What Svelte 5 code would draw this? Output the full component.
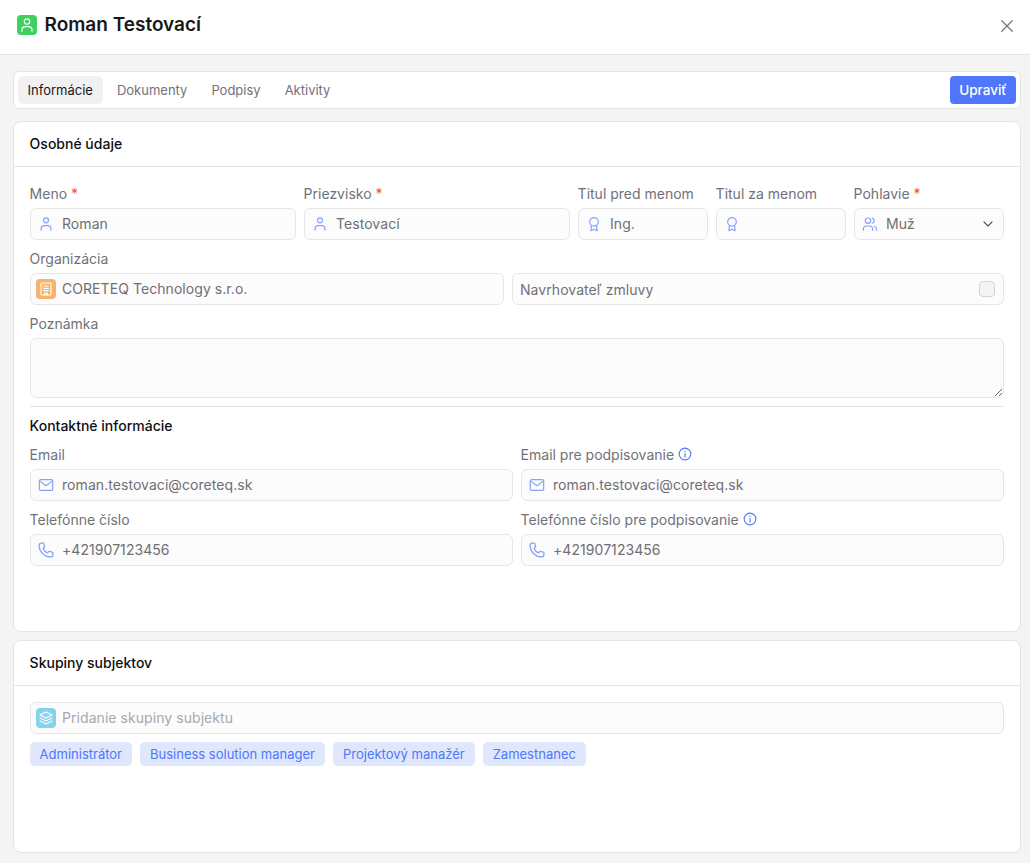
<script>
  const tabs = ['Informácie', 'Dokumenty', 'Podpisy', 'Aktivity'];
  const groups = ['Administrátor', 'Business solution manager', 'Projektový manažér', 'Zamestnanec'];
</script>

{#snippet person()}
  <svg class="ic" viewBox="0 0 24 24"><circle cx="12" cy="6.5" r="3.8"/><path d="M4.6 21.2v-1.7a5 5 0 0 1 5-5h4.8a5 5 0 0 1 5 5v1.700"/></svg>
{/snippet}
{#snippet award()}
  <svg class="ic" viewBox="0 0 24 24"><circle cx="12" cy="8.8" r="6.5"/><path d="M8.2 14.4L7.4 22l4.6-2.2 4.6 2.2-.8-7.600"/></svg>
{/snippet}
{#snippet mail()}
  <svg class="ic" viewBox="0 0 24 24"><rect x="2" y="4" width="20" height="16" rx="2"/><path d="M2.6 6.2L12 13l9.4-6.800"/></svg>
{/snippet}
{#snippet phone()}
  <svg class="ic" viewBox="1 1 22 22"><path d="M5.5 2.5h2.6a1 1 0 0 1 1 .8l1 4a1 1 0 0 1-.4 1L8 9.8a12 12 0 0 0 6.2 6.2l1.5-1.7a1 1 0 0 1 1-.4l4 1a1 1 0 0 1 .8 1v2.6a3 3 0 0 1-3 3A16 16 0 0 1 2.5 5.5a3 3 0 0 1 3-3z"/></svg>
{/snippet}
{#snippet info()}
  <svg class="info" viewBox="0 0 24 24"><circle cx="12" cy="12" r="10"/><path d="M12 11v6M12 7v.6"/></svg>
{/snippet}

<div class="page">
  <header class="top">
    <div class="title">
      <span class="badge green">
        <svg viewBox="0 0 24 24"><circle cx="12" cy="6.8" r="4"/><path d="M4.5 21.5v-2a5 5 0 0 1 5-5h5a5 5 0 0 1 5 5v2"/></svg>
      </span>
      <h1>Roman Testovací</h1>
    </div>
    <button class="close" aria-label="Zavrieť">
      <svg viewBox="0 0 24 24"><path d="M5 5l14 14M19 5L5 19"/></svg>
    </button>
  </header>

  <main class="content">
    <nav class="tabs">
      <div class="tablist">
        {#each tabs as tab, i}
          <span class="tab" class:active={i === 0}>{tab}</span>
        {/each}
      </div>
      <button class="edit">Upraviť</button>
    </nav>

    <section class="card first">
      <h2 class="card-head">Osobné údaje</h2>
      <div class="card-body">
        <div class="row r1">
          <div class="field">
            <div class="label">Meno <i>*</i></div>
            <div class="input">{@render person()}<span>Roman</span></div>
          </div>
          <div class="field">
            <div class="label">Priezvisko <i>*</i></div>
            <div class="input">{@render person()}<span>Testovací</span></div>
          </div>
          <div class="field">
            <div class="label">Titul pred menom</div>
            <div class="input">{@render award()}<span>Ing.</span></div>
          </div>
          <div class="field">
            <div class="label">Titul za menom</div>
            <div class="input">{@render award()}</div>
          </div>
          <div class="field">
            <div class="label">Pohlavie <i>*</i></div>
            <div class="input">
              <svg class="ic" viewBox="0 0 24 24"><circle cx="9" cy="7" r="4"/><path d="M2 21.5V20a5 5 0 0 1 5-5h4a5 5 0 0 1 5 5v1.500M15.500 3.200a4 4 0 0 1 0 7.600M18.500 15.300a5 5 0 0 1 3.500 4.700v1.500"/></svg>
              <span>Muž</span>
              <svg class="chev" viewBox="0 0 24 24"><path d="M6 9l6 6 6-6"/></svg>
            </div>
          </div>
        </div>

        <div class="row r2">
          <div class="field">
            <div class="label">Organizácia</div>
            <div class="input badged">
              <span class="badge orange">
                <svg viewBox="0 0 24 24"><rect x="4.500" y="3" width="15" height="18" rx="1.500"/><path d="M8.500 7.500h7M8.500 11h7M8.500 14.500h7M10 21v-3h4v3"/></svg>
              </span>
              <span>CORETEQ Technology s.r.o.</span>
            </div>
          </div>
          <div class="field">
            <div class="label">&nbsp;</div>
            <div class="input check"><span>Navrhovateľ zmluvy</span><b class="box"></b></div>
          </div>
        </div>

        <div class="field">
          <div class="label">Poznámka</div>
          <textarea aria-label="Poznámka"></textarea>
        </div>

        <hr />
        <h3>Kontaktné informácie</h3>

        <div class="row r3">
          <div class="field">
            <div class="label">Email</div>
            <div class="input">{@render mail()}<span>roman.testovaci@coreteq.sk</span></div>
          </div>
          <div class="field">
            <div class="label">Email pre podpisovanie {@render info()}</div>
            <div class="input">{@render mail()}<span>roman.testovaci@coreteq.sk</span></div>
          </div>
          <div class="field">
            <div class="label">Telefónne číslo</div>
            <div class="input">{@render phone()}<span>+421907123456</span></div>
          </div>
          <div class="field">
            <div class="label">Telefónne číslo pre podpisovanie {@render info()}</div>
            <div class="input">{@render phone()}<span>+421907123456</span></div>
          </div>
        </div>
      </div>
    </section>

    <section class="card second">
      <h2 class="card-head">Skupiny subjektov</h2>
      <div class="card-body">
        <div class="input badged placeholder">
          <span class="badge blue">
            <svg viewBox="0 0 24 24"><path d="M12 3l9 4.500-9 4.500-9-4.500z"/><path d="M3 12l9 4.500 9-4.500M3 16.500L12 21l9-4.500"/></svg>
          </span>
          <span>Pridanie skupiny subjektu</span>
        </div>
        <div class="chips">
          {#each groups as g}
            <span class="chip">{g}</span>
          {/each}
        </div>
      </div>
    </section>
  </main>
</div>

<style>
  :global(body) {
    margin: 0;
    background: #f4f4f4;
    font-family: Inter, "Liberation Sans", sans-serif;
  }
  .page {
    width: 1030px;
    height: 863px;
    overflow: hidden;
    background: #f4f4f4;
    font-size: 14px;
    line-height: 20px;
  }
  .top {
    height: 54px;
    background: #fff;
    border-bottom: 1px solid #e4e4e5;
    display: flex;
    align-items: center;
    justify-content: space-between;
    padding: 0 14px 0 17px;
  }
  .title {
    display: flex;
    align-items: center;
    gap: 8px;
    margin-top: -5px;
  }
  h1 {
    margin: 0;
    font-size: 19px;
    line-height: 28px;
    font-weight: 600;
    color: #18181b;
    text-indent: -0.5px;
  }
  .badge {
    width: 20px;
    height: 20px;
    border-radius: 4px;
    display: flex;
    align-items: center;
    justify-content: center;
    flex: none;
  }
  .badge svg {
    width: 16px;
    height: 16px;
    fill: none;
    stroke: #fff;
    stroke-width: 1.7;
    stroke-linecap: round;
    stroke-linejoin: round;
  }
  .green { background: #3fd15e; }
  .orange { background: #f9b26b; }
  .blue { background: #86d3ec; }
  .close {
    width: 18px;
    height: 18px;
    padding: 0;
    border: 0;
    background: none;
    margin-top: -3px;
  }
  .close svg {
    width: 18px;
    height: 18px;
    fill: none;
    stroke: #71717a;
    stroke-width: 1.6;
    stroke-linecap: round;
    display: block;
  }
  .content {
    padding: 16px 9px 0 13px;
  }
  .tabs {
    height: 36px;
    background: #fff;
    border: 1px solid #e4e4e5;
    border-radius: 6px;
    display: flex;
    align-items: center;
    justify-content: space-between;
    padding: 0 4px;
  }
  .tablist {
    display: flex;
    gap: 4px;
  }
  .tab {
    height: 28px;
    line-height: 28px;
    padding: 0 10.4px 0 9.6px;
    border-radius: 6px;
    color: #71717a;
    font-size: 13px;
  }
  .tab.active {
    background: #f1f0f2;
    color: #18181b;
  }
  .edit {
    height: 28px;
    width: 66px;
    padding: 0;
    border: 0;
    border-radius: 4px;
    background: #4f76fb;
    color: #fff;
    font: 500 13.5px/28px Inter, sans-serif;
  }
  .card {
    background: #fff;
    border: 1px solid #e4e4e5;
    border-radius: 8px;
    box-sizing: border-box;
  }
  .first {
    margin-top: 12px;
    height: 511px;
  }
  .second {
    margin-top: 8px;
    height: 213px;
  }
  .card-head {
    margin: 0;
    height: 44px;
    border-bottom: 1px solid #e4e4e5;
    padding: 0 16px;
    font-size: 14px;
    font-weight: 450;
    line-height: 44px;
    color: #0f0f11;
    text-indent: -0.4px;
  }
  .card-body {
    padding: 16px;
  }
  .row {
    display: grid;
    column-gap: 8px;
  }
  .r1 { grid-template-columns: 266px 266px 130px 130px 150px; }
  .r2 { grid-template-columns: 474px 492px; }
  .r3 { grid-template-columns: 483px 483px; }
  .field {
    display: flex;
    flex-direction: column;
    margin-bottom: 8px;
  }
  .label {
    height: 25px;
    line-height: 22px;
    color: #71717a;
    white-space: nowrap;
    text-indent: -0.4px;
  }
  .label i {
    font-style: normal;
    color: #e5532d;
  }
  .input {
    height: 32px;
    box-sizing: border-box;
    background: #fcfcfc;
    border: 1px solid #e6e6e7;
    border-radius: 6px;
    display: flex;
    align-items: center;
    gap: 8px;
    padding: 0 7px;
    color: #6f6f74;
    letter-spacing: 0.06px;
  }
  .input.badged {
    padding: 0 5px;
    gap: 6px;
  }
  .ic {
    width: 16px;
    height: 16px;
    flex: none;
    fill: none;
    stroke: #86a2fc;
    stroke-width: 1.8;
    stroke-linecap: round;
    stroke-linejoin: round;
  }
  .chev {
    width: 16px;
    height: 16px;
    margin-left: auto;
    fill: none;
    stroke: #52525b;
    stroke-width: 1.6;
    stroke-linecap: round;
    stroke-linejoin: round;
  }
  .check span {
    color: #71717a;
    margin-top: 2px;
  }
  .box {
    margin-left: auto;
    margin-right: 1px;
    width: 16px;
    height: 16px;
    box-sizing: border-box;
    border: 1px solid #d4d4d8;
    border-radius: 4px;
    background: #f4f4f5;
  }
  textarea {
    display: block;
    width: 100%;
    height: 60px;
    box-sizing: border-box;
    background: #fcfcfc;
    border: 1px solid #e6e6e7;
    border-radius: 6px;
    margin: 0;
    padding: 8px;
  }
  hr {
    margin: 0;
    border: 0;
    border-top: 1px solid #e4e4e5;
  }
  h3 {
    margin: 0;
    height: 37px;
    padding-top: 9px;
    box-sizing: border-box;
    font-size: 14px;
    line-height: 20px;
    font-weight: 450;
    color: #0f0f11;
    text-indent: -0.4px;
  }
  .info {
    width: 14px;
    height: 14px;
    vertical-align: -1px;
    fill: none;
    stroke: #4f76fb;
    stroke-width: 1.9;
    stroke-linecap: round;
  }
  .placeholder span:last-child { color: #a8a8ad; }
  .chips {
    display: flex;
    gap: 8px;
    margin-top: 8px;
  }
  .chip {
    height: 24px;
    line-height: 24px;
    padding: 0 10.4px 0 9.6px;
    border-radius: 5px;
    background: #dfe7fd;
    color: #4f76fb;
    font-size: 13px;
  }
</style>
